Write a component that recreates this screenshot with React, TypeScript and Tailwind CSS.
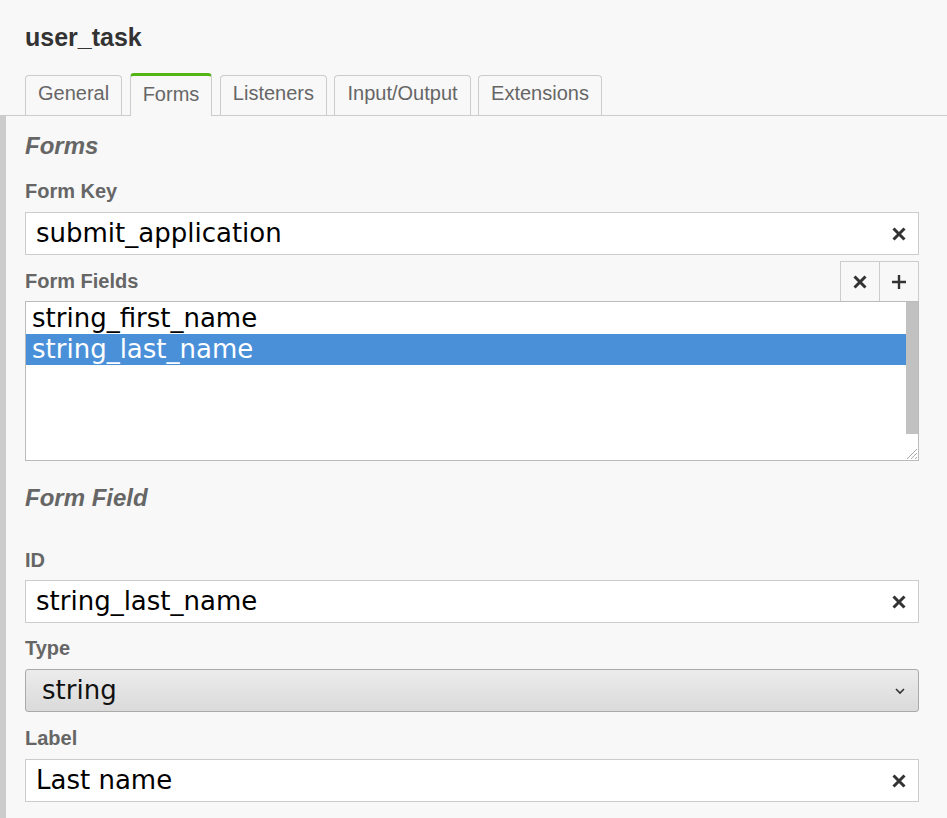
import React from "react";

const XIcon = () => (
  <svg width="14" height="14" viewBox="0 0 14 14" className="block">
    <path d="M1.5 1.5 L12.5 12.5 M12.5 1.5 L1.5 12.5" stroke="#333" strokeWidth="3" strokeLinecap="butt" fill="none" />
  </svg>
);

const PlusIcon = () => (
  <svg width="16" height="16" viewBox="0 0 16 16" className="block">
    <path d="M8 1 V15 M1 8 H15" stroke="#333" strokeWidth="2.4" fill="none" />
  </svg>
);

const Label = ({ children }: { children: React.ReactNode }) => (
  <div className="text-[20px] leading-[24px] font-bold text-[#666]" style={{ fontFamily: '"Liberation Sans", Arial, sans-serif' }}>
    {children}
  </div>
);

const TextInput = ({ value }: { value: string }) => (
  <div className="h-[43px] bg-white border border-[#ccc] flex items-center pl-[10px] pr-[12px]">
    <span className="flex-1 text-[26px] text-black" style={{ fontFamily: '"DejaVu Sans", sans-serif' }}>{value}</span>
    <XIcon />
  </div>
);

export default function App() {
  const sans = { fontFamily: '"Liberation Sans", Arial, sans-serif' };
  const tabs = ["General", "Forms", "Listeners", "Input/Output", "Extensions"];
  return (
    <div className="w-[947px] h-[818px] bg-[#f8f8f8] overflow-hidden flex flex-col" style={sans}>
      <div className="pl-[25px] pt-[22px] text-[25px] leading-[30px] font-bold text-[#333]">user_task</div>
      <div className="mt-[21px] flex items-end gap-[7.5px] pl-[25px] border-b border-[#ccc] h-[43px]">
        {tabs.map((t) =>
          t === "Forms" ? (
            <div
              key={t}
              className="h-[43px] -mb-px px-[12px] bg-[#f8f8f8] border-x border-[#ccc] border-t-[3px] border-t-[#52b415] rounded-t-[4px] flex items-center text-[20px] text-[#666]"
            >
              <span className="pb-[5px]">{t}</span>
            </div>
          ) : (
            <div
              key={t}
              className="h-[40px] px-[12px] border-x border-t border-[#ccc] rounded-t-[4px] flex items-center text-[20px] text-[#666]"
            >
              <span className="pb-[5px]">{t}</span>
            </div>
          )
        )}
      </div>
      <div className="flex-1 border-l-[6px] border-[#ccc] pl-[19px] pr-[28px] pt-[15px] flex flex-col">
        <div className="text-[24px] leading-[30px] font-bold italic text-[#666]">Forms</div>
        <div className="mt-[18px]"><Label>Form Key</Label></div>
        <div className="mt-[9px]"><TextInput value="submit_application" /></div>
        <div className="mt-[6px] h-[40px] flex items-center">
          <div className="flex-1"><Label>Form Fields</Label></div>
          <div className="flex h-[40px] border border-b-0 border-[#ccc]">
            <div className="w-[39px] flex items-center justify-center border-r border-[#ccc]"><XIcon /></div>
            <div className="w-[38px] flex items-center justify-center"><PlusIcon /></div>
          </div>
        </div>
        <div className="relative h-[160px] bg-white border border-[#bbb] flex">
          <div className="flex-1 flex flex-col text-[26px] leading-[31px] pt-[1px]" style={{ fontFamily: '"DejaVu Sans", sans-serif' }}>
            <div className="h-[31px] pl-[6px] text-black">string_first_name</div>
            <div className="h-[31px] pl-[6px] bg-[#4a90d9] text-white">string_last_name</div>
          </div>
          <div className="w-[12px] flex flex-col">
            <div className="h-[132px] bg-[#c1c1c1]"></div>
          </div>
          <svg className="absolute right-0 bottom-0" width="14" height="14" viewBox="0 0 14 14">
            <path d="M13 3 L3 13 M13 7 L7 13 M13 11 L11 13" stroke="#aaa" strokeWidth="1" fill="none" />
          </svg>
        </div>
        <div className="mt-[22px] text-[24px] leading-[30px] font-bold italic text-[#666]">Form Field</div>
        <div className="mt-[35px]"><Label>ID</Label></div>
        <div className="mt-[8px]"><TextInput value="string_last_name" /></div>
        <div className="mt-[13px]"><Label>Type</Label></div>
        <div className="mt-[9px] h-[43px] rounded-[3px] border border-[#aaa] bg-gradient-to-b from-[#ececec] to-[#dadada] flex items-center pl-[16px] pr-[12px]">
          <span className="flex-1 text-[26px] text-[#111]" style={{ fontFamily: '"DejaVu Sans", sans-serif' }}>string</span>
          <svg width="12" height="8" viewBox="0 0 12 8" className="block">
            <path d="M2 2 L6 6 L10 2" stroke="#333" strokeWidth="1.6" fill="none" />
          </svg>
        </div>
        <div className="mt-[14px]"><Label>Label</Label></div>
        <div className="mt-[9px]"><TextInput value="Last name" /></div>
      </div>
    </div>
  );
}
